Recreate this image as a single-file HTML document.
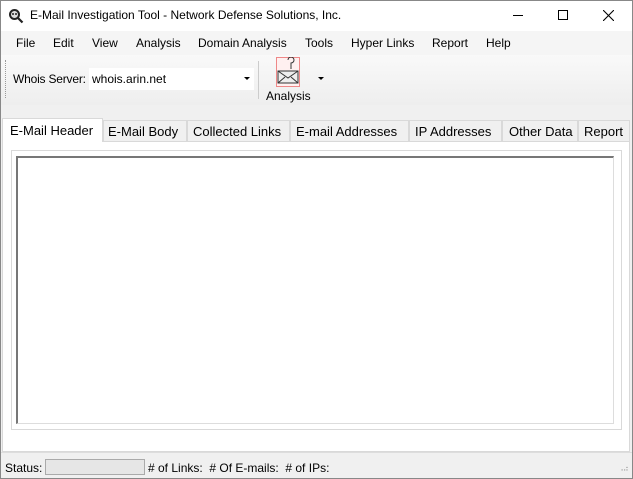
<!DOCTYPE html>
<html><head><style>
*{margin:0;padding:0;box-sizing:border-box}
body{width:633px;height:479px;overflow:hidden;font-family:"Liberation Sans",Arial,sans-serif;font-size:12px;color:#000;background:#f0f0f0;position:relative}
.win{position:absolute;left:0;top:0;width:633px;height:479px;border:1px solid #888;}
.abs{position:absolute;white-space:nowrap}
</style></head><body>
<div class="win"></div>
<div class="abs" style="left:1px;top:1px;width:631px;height:30px;background:#fff"></div>
<svg class="abs" style="left:8px;top:8px" width="16" height="16" viewBox="0 0 16 16"><circle cx="6.5" cy="6.5" r="4.5" fill="#ddd" stroke="#222" stroke-width="2"/><circle cx="5" cy="6" r="1" fill="#222"/><circle cx="8" cy="6" r="1" fill="#222"/><path d="M10 10l4.5 4.5" stroke="#222" stroke-width="2.2"/></svg>
<div class="abs" style="left:30px;top:8px;font-size:12px">E-Mail Investigation Tool - Network Defense Solutions, Inc.</div>
<div class="abs" style="left:513px;top:15px;width:10px;height:1px;background:#000"></div>
<div class="abs" style="left:558px;top:10px;width:10px;height:10px;border:1px solid #000"></div>
<svg class="abs" style="left:603px;top:10px" width="11" height="11"><path d="M0 0L11 11M11 0L0 11" stroke="#000" stroke-width="1.1"/></svg>
<div class="abs" style="left:1px;top:31px;width:631px;height:24px;background:#f5f5f5"></div>
<div class="abs" style="top:36px;left:16px">File</div>
<div class="abs" style="top:36px;left:53px">Edit</div>
<div class="abs" style="top:36px;left:92px">View</div>
<div class="abs" style="top:36px;left:136px">Analysis</div>
<div class="abs" style="top:36px;left:198px">Domain Analysis</div>
<div class="abs" style="top:36px;left:305px">Tools</div>
<div class="abs" style="top:36px;left:351px">Hyper Links</div>
<div class="abs" style="top:36px;left:432px">Report</div>
<div class="abs" style="top:36px;left:486px">Help</div>
<div class="abs" style="left:1px;top:55px;width:631px;height:50px;background:linear-gradient(#f9f9f9,#eeeeee)"></div>
<div class="abs" style="left:5px;top:60px;width:1px;height:38px;border-left:1px dotted #999"></div>
<div class="abs" style="left:13px;top:72px;letter-spacing:-0.2px">Whois Server:</div>
<div class="abs" style="left:89px;top:68px;width:165px;height:22px;background:#fff"></div>
<div class="abs" style="left:92px;top:72px">whois.arin.net</div>
<div class="abs" style="left:244px;top:77px;width:0;height:0;border-left:3px solid transparent;border-right:3px solid transparent;border-top:3px solid #000"></div>
<div class="abs" style="left:258px;top:61px;width:1px;height:38px;background:#ccc"></div>
<svg class="abs" style="left:276px;top:57px" width="24" height="30" viewBox="0 0 24 30"><rect x="0.5" y="0.5" width="23" height="29" fill="#fff0f0" stroke="#e88"/><path d="M12 3a3 3 0 1 1 3 3v6" fill="none" stroke="#333"/><path d="M2 14h20v12H2z" fill="#eee" stroke="#333"/><path d="M2 14l10 7 10-7M2 26l7-6M22 26l-7-6" fill="none" stroke="#333"/></svg>
<div class="abs" style="left:266px;top:89px">Analysis</div>
<div class="abs" style="left:318px;top:77px;width:0;height:0;border-left:3px solid transparent;border-right:3px solid transparent;border-top:3px solid #000"></div>
<div class="abs" style="left:2px;top:141px;width:628px;height:311px;background:#fff;border:1px solid #d9d9d9"></div>
<div class="abs" style="left:2px;top:118px;width:101px;height:24px;background:#fff;border:1px solid #d9d9d9;border-bottom:none;padding:4px 0 0 7px;font-size:13px">E-Mail Header</div>
<div class="abs" style="left:103px;top:120px;width:84px;height:21px;border:1px solid #d9d9d9;border-bottom:none;padding:3px 0 0 4px;font-size:13px">E-Mail Body</div>
<div class="abs" style="left:187px;top:120px;width:103px;height:21px;border:1px solid #d9d9d9;border-bottom:none;padding:3px 0 0 5px;font-size:13px">Collected Links</div>
<div class="abs" style="left:290px;top:120px;width:119px;height:21px;border:1px solid #d9d9d9;border-bottom:none;padding:3px 0 0 5px;font-size:13px">E-mail Addresses</div>
<div class="abs" style="left:409px;top:120px;width:93px;height:21px;border:1px solid #d9d9d9;border-bottom:none;padding:3px 0 0 5px;font-size:13px">IP Addresses</div>
<div class="abs" style="left:502px;top:120px;width:76px;height:21px;border:1px solid #d9d9d9;border-bottom:none;padding:3px 0 0 6px;font-size:13px">Other Data</div>
<div class="abs" style="left:578px;top:120px;width:52px;height:21px;border:1px solid #d9d9d9;border-bottom:none;padding:3px 0 0 5px;font-size:13px">Report</div>
<div class="abs" style="left:11px;top:150px;width:611px;height:280px;border:1px solid #d9d9d9"></div>
<div class="abs" style="left:16px;top:156px;width:598px;height:268px;border:1px solid #ddd;border-top:2px solid #777;border-left:2px solid #777"></div>
<div class="abs" style="left:1px;top:452px;width:631px;height:1px;background:#ddd"></div>
<div class="abs" style="left:5px;top:461px">Status:</div>
<div class="abs" style="left:45px;top:459px;width:100px;height:16px;background:#e6e6e6;border:1px solid #aaa"></div>
<div class="abs" style="left:148px;top:461px"># of Links:&nbsp; # Of E-mails:&nbsp; # of IPs:</div>
<div class="abs" style="left:618px;top:464px;font-size:8px;color:#999;letter-spacing:-1px">⠠⠴</div>
</body></html>
